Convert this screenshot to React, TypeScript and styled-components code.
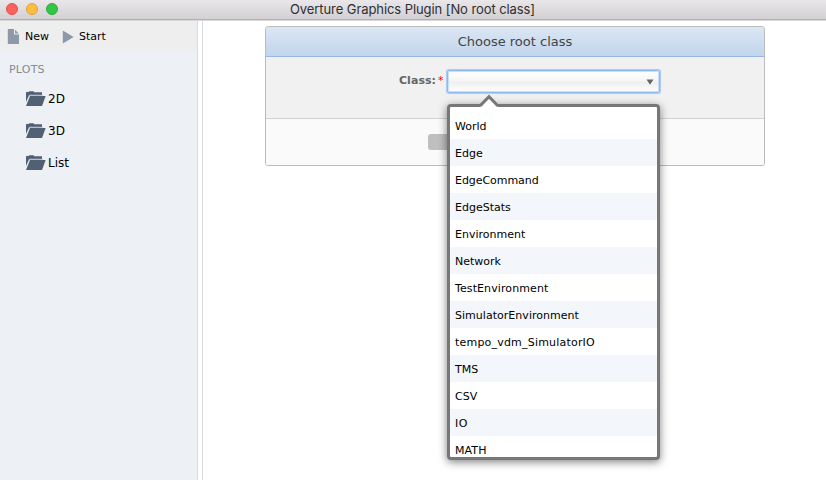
import React from "react";
import styled, { createGlobalStyle } from "styled-components";

const GlobalStyle = createGlobalStyle`
  * { box-sizing: border-box; }
  body { margin: 0; overflow: hidden; background: #fff; }
`;

const Window = styled.div`
  width: 826px;
  height: 480px;
  display: flex;
  flex-direction: column;
  overflow: hidden;
  background: #fff;
  color: #000;
  font: 11px "DejaVu Sans", Verdana, sans-serif;
`;

const TitleBar = styled.header`
  position: relative;
  flex: none;
  height: 21px;
  display: flex;
  align-items: center;
  gap: 8px;
  padding: 0 6px 3px;
  background: linear-gradient(#e9e7e9, #d2d0d2 19px);
  border-bottom: 1px solid #d9d7d9;
  box-shadow: inset 0 -1px 0 #b3b0b3;
`;

const Light = styled.span<{ $fill: string; $edge: string }>`
  width: 12px;
  height: 12px;
  border-radius: 50%;
  background: ${(p) => p.$fill};
  border: 1px solid ${(p) => p.$edge};
`;

const WindowTitle = styled.div`
  position: absolute;
  left: 0;
  right: 1px;
  top: 1px;
  text-align: center;
  font: 13px/17px Inter, sans-serif;
  letter-spacing: -0.08px;
  color: #302e30;
`;

const Body = styled.div`
  flex: 1;
  display: flex;
  gap: 4px;
  min-height: 0;
`;

const Sidebar = styled.aside`
  width: 198px;
  flex: none;
  background: #edf0f4;
  border-right: 1px solid #d9dadb;
`;

const Toolbar = styled.div`
  height: 30px;
  display: flex;
  align-items: center;
  padding-left: 7px;
  background: #eeeeee;
`;

const ToolButton = styled.div<{ $gap: number }>`
  display: flex;
  align-items: center;
  margin-right: 13px;
  gap: ${(p) => p.$gap}px;
  line-height: 14px;
  padding-top: 1px;
  svg { display: block; }
`;

const SectionTitle = styled.div`
  padding: 11px 0 0 9px;
  height: 32px;
  line-height: 15px;
  color: #868b92;
  letter-spacing: 0.2px;
`;

const FolderRow = styled.div`
  height: 32px;
  display: flex;
  align-items: center;
  gap: 2px;
  padding-left: 26px;
  font-size: 12px;
  svg { margin-bottom: 1px; }
`;

const Main = styled.main`
  flex: 1;
  border-left: 1px solid #d9dadb;
  padding: 5px 0 0 62px;
`;

const Form = styled.section`
  width: 500px;
  height: 140px;
  display: flex;
  flex-direction: column;
  border: 1px solid #bcbcbc;
  border-radius: 3px;
  background: #f1f1f1;
`;

const FormHeader = styled.h1`
  margin: 0;
  height: 30px;
  border-bottom: 1px solid #95b6e8;
  border-radius: 2px 2px 0 0;
  background: linear-gradient(#dae6f3, #c2d5ed);
  color: #444;
  font-weight: 400;
  font-size: 13px;
  line-height: 30px;
  text-align: center;
`;

const FormBody = styled.div`
  flex: 1;
  display: flex;
  align-items: flex-start;
  padding: 13px 0 0 133px;
`;

const FieldLabel = styled.label`
  flex: none;
  width: 48px;
  line-height: 21px;
  font-weight: 700;
  color: #666;
  letter-spacing: 0.05px;
  white-space: nowrap;
`;

const Required = styled.span`
  font-weight: 400;
  color: #f00;
  margin-left: 2px;
`;

const Select = styled.div`
  position: relative;
  width: 213px;
  height: 23px;
  display: flex;
  align-items: center;
  justify-content: flex-end;
  padding: 1px 5px 0 0;
  border: 1px solid #8fb8ec;
  border-radius: 2px;
  background: linear-gradient(#fff, #f6f6f6 45%, #efefef 55%, #fff);
  box-shadow: 0 0 1px 1px #a9caf3, inset 0 0 1px 1px #c5dcf8;
`;

const FormFooter = styled.div`
  height: 47px;
  border-top: 1px solid #d2d2d2;
  border-radius: 0 0 2px 2px;
  background: #fafafa;
  padding: 15px 0 0 162px;
`;

const SaveButton = styled.div`
  width: 170px;
  height: 16px;
  border-radius: 3px;
  background: #bfbfbf;
`;

const Popup = styled.div`
  position: absolute;
  z-index: 1;
  left: -1px;
  top: 33px;
  width: 213px;
  height: 356px;
  border: 3px solid #777;
  border-radius: 4px;
  background: #fff;
  box-shadow: 0 2px 9px rgba(0, 0, 0, 0.5);
`;

const Pointer = styled.svg`
  position: absolute;
  left: 30px;
  top: -13px;
`;

const Options = styled.ul`
  height: 350px;
  margin: 0;
  padding: 5px 0 0;
  list-style: none;
  overflow: hidden;
`;

const Option = styled.li<{ $tracking: number }>`
  height: 27px;
  padding: 1px 5px 0;
  line-height: 27px;
  letter-spacing: ${(p) => p.$tracking}px;
  white-space: nowrap;
  &:nth-child(even) { background: #f3f6fb; }
`;

const FileIcon = () => (
  <svg width="12" height="15" viewBox="0 0 12 15" fill="#8d99a7">
    <path d="M.8 0H7V5.5H12V15H.8Z" />
    <path d="M8 .8 11.7 4.5H8Z" />
  </svg>
);

const PlayIcon = () => (
  <svg width="12" height="14" viewBox="0 0 12 14" fill="#8d99a7">
    <path d="M.8 .5 11.7 7 .8 13.5Z" />
  </svg>
);

const FolderIcon = () => (
  <svg width="20" height="15" viewBox="0 0 20 15">
    <path fill="#526074" d="M0 11V1.5Q0 1 .6 1H2.5L3.2 .2H7.5L8.3 1.2H16V4H3.2L0 11Z" />
    <path fill="#b5bfca" d="M3.2 3.8H16.5V5.2H2.8L.4 11Z" />
    <path fill="#526074" d="M4 5H19.7L16 15H0Z" />
  </svg>
);

const folders = ["2D", "3D", "List"];

const classes = [
  { name: "World", tracking: 0 },
  { name: "Edge", tracking: 0 },
  { name: "EdgeCommand", tracking: -0.05 },
  { name: "EdgeStats", tracking: 0 },
  { name: "Environment", tracking: 0 },
  { name: "Network", tracking: 0 },
  { name: "TestEnvironment", tracking: 0.1 },
  { name: "SimulatorEnvironment", tracking: 0.03 },
  { name: "tempo_vdm_SimulatorIO", tracking: 0.2 },
  { name: "TMS", tracking: 0 },
  { name: "CSV", tracking: 0 },
  { name: "IO", tracking: 0.6 },
  { name: "MATH", tracking: 0.1 },
];

export default function App() {
  return (
    <Window>
      <GlobalStyle />
      <TitleBar>
        <Light $fill="#fc615c" $edge="#e2504c" />
        <Light $fill="#fdbd40" $edge="#dfa138" />
        <Light $fill="#33c748" $edge="#2aab3b" />
        <WindowTitle>Overture Graphics Plugin [No root class]</WindowTitle>
      </TitleBar>
      <Body>
        <Sidebar>
          <Toolbar>
            <ToolButton $gap={6}><FileIcon />New</ToolButton>
            <ToolButton $gap={5}><PlayIcon />Start</ToolButton>
          </Toolbar>
          <SectionTitle>PLOTS</SectionTitle>
          {folders.map((name) => (
            <FolderRow key={name}><FolderIcon />{name}</FolderRow>
          ))}
        </Sidebar>
        <Main>
          <Form>
            <FormHeader>Choose root class</FormHeader>
            <FormBody>
              <FieldLabel>Class:<Required>*</Required></FieldLabel>
              <Select>
                <svg width="8" height="6" viewBox="0 0 8 6"><path d="M.5.5H7.5L4 5.7Z" fill="#666" /></svg>
                <Popup>
                  <Pointer width="20" height="14" viewBox="0 0 20 14">
                    <path d="M0 13 9 3 18 13V14H0Z" fill="#fff" />
                    <path d="M0 12 9 2.7 18 12" fill="none" stroke="#777" strokeWidth="3" />
                  </Pointer>
                  <Options>
                    {classes.map(({ name, tracking }) => (
                      <Option key={name} $tracking={tracking}>{name}</Option>
                    ))}
                  </Options>
                </Popup>
              </Select>
            </FormBody>
            <FormFooter><SaveButton /></FormFooter>
          </Form>
        </Main>
      </Body>
    </Window>
  );
}
